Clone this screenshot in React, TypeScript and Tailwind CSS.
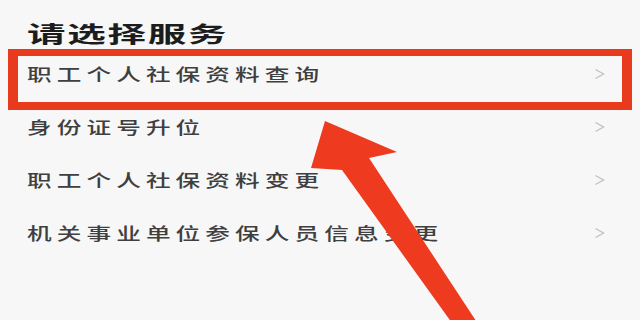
import React from "react";

const rows = ["身份证号升位", "职工个人社保资料变更", "机关事业单位参保人员信息变更"];

function Chevron() {
  return (
    <svg width="11" height="12" viewBox="0 0 11 12" className="shrink-0">
      <polyline points="1.5,1.5 9.5,6 1.5,10.5" fill="none" stroke="#c2c2c2" strokeWidth="1.4" />
    </svg>
  );
}

function RowText({ children }: { children: React.ReactNode }) {
  return (
    <span className="inline-block origin-left scale-x-[1.45] text-[17px] leading-[24px] font-medium tracking-[3.5px] text-[#3f3f3f] whitespace-nowrap">
      {children}
    </span>
  );
}

export default function App() {
  return (
    <div
      className="relative w-[640px] h-[320px] overflow-hidden bg-[#f7f7f7]"
      style={{ fontFamily: '"Noto Sans CJK SC", "Noto Sans", sans-serif' }}
    >
      <div className="pt-[18px] pl-[27px] h-[49px]">
        <span className="inline-block origin-left scale-x-[1.75] text-[22px] leading-[28px] font-bold tracking-[1px] text-[#1c1c1c]">
          请选择服务
        </span>
      </div>

      <div className="ml-[8px] w-[624px] h-[61px] border-[#e83a1c] border-l-[10px] border-r-[10px] border-t-[7px] border-b-[8px] flex items-start justify-between pt-[6px] pl-[9px] pr-[17px]">
        <RowText>职工个人社保资料查询</RowText>
        <div className="h-[24px] flex items-center">
          <Chevron />
        </div>
      </div>

      {rows.map((r) => (
        <div key={r} className="h-[53px] flex items-start justify-between pt-[5px] pl-[27px] pr-[35px]">
          <RowText>{r}</RowText>
          <div className="h-[24px] flex items-center">
            <Chevron />
          </div>
        </div>
      ))}

      <svg className="absolute left-0 top-0 pointer-events-none" width="640" height="320" viewBox="0 0 640 320">
        <polygon
          points="325,121 397,152 369,158 482,330 457,330 342,170 311,168"
          fill="#ee3b1f"
        />
      </svg>
    </div>
  );
}
